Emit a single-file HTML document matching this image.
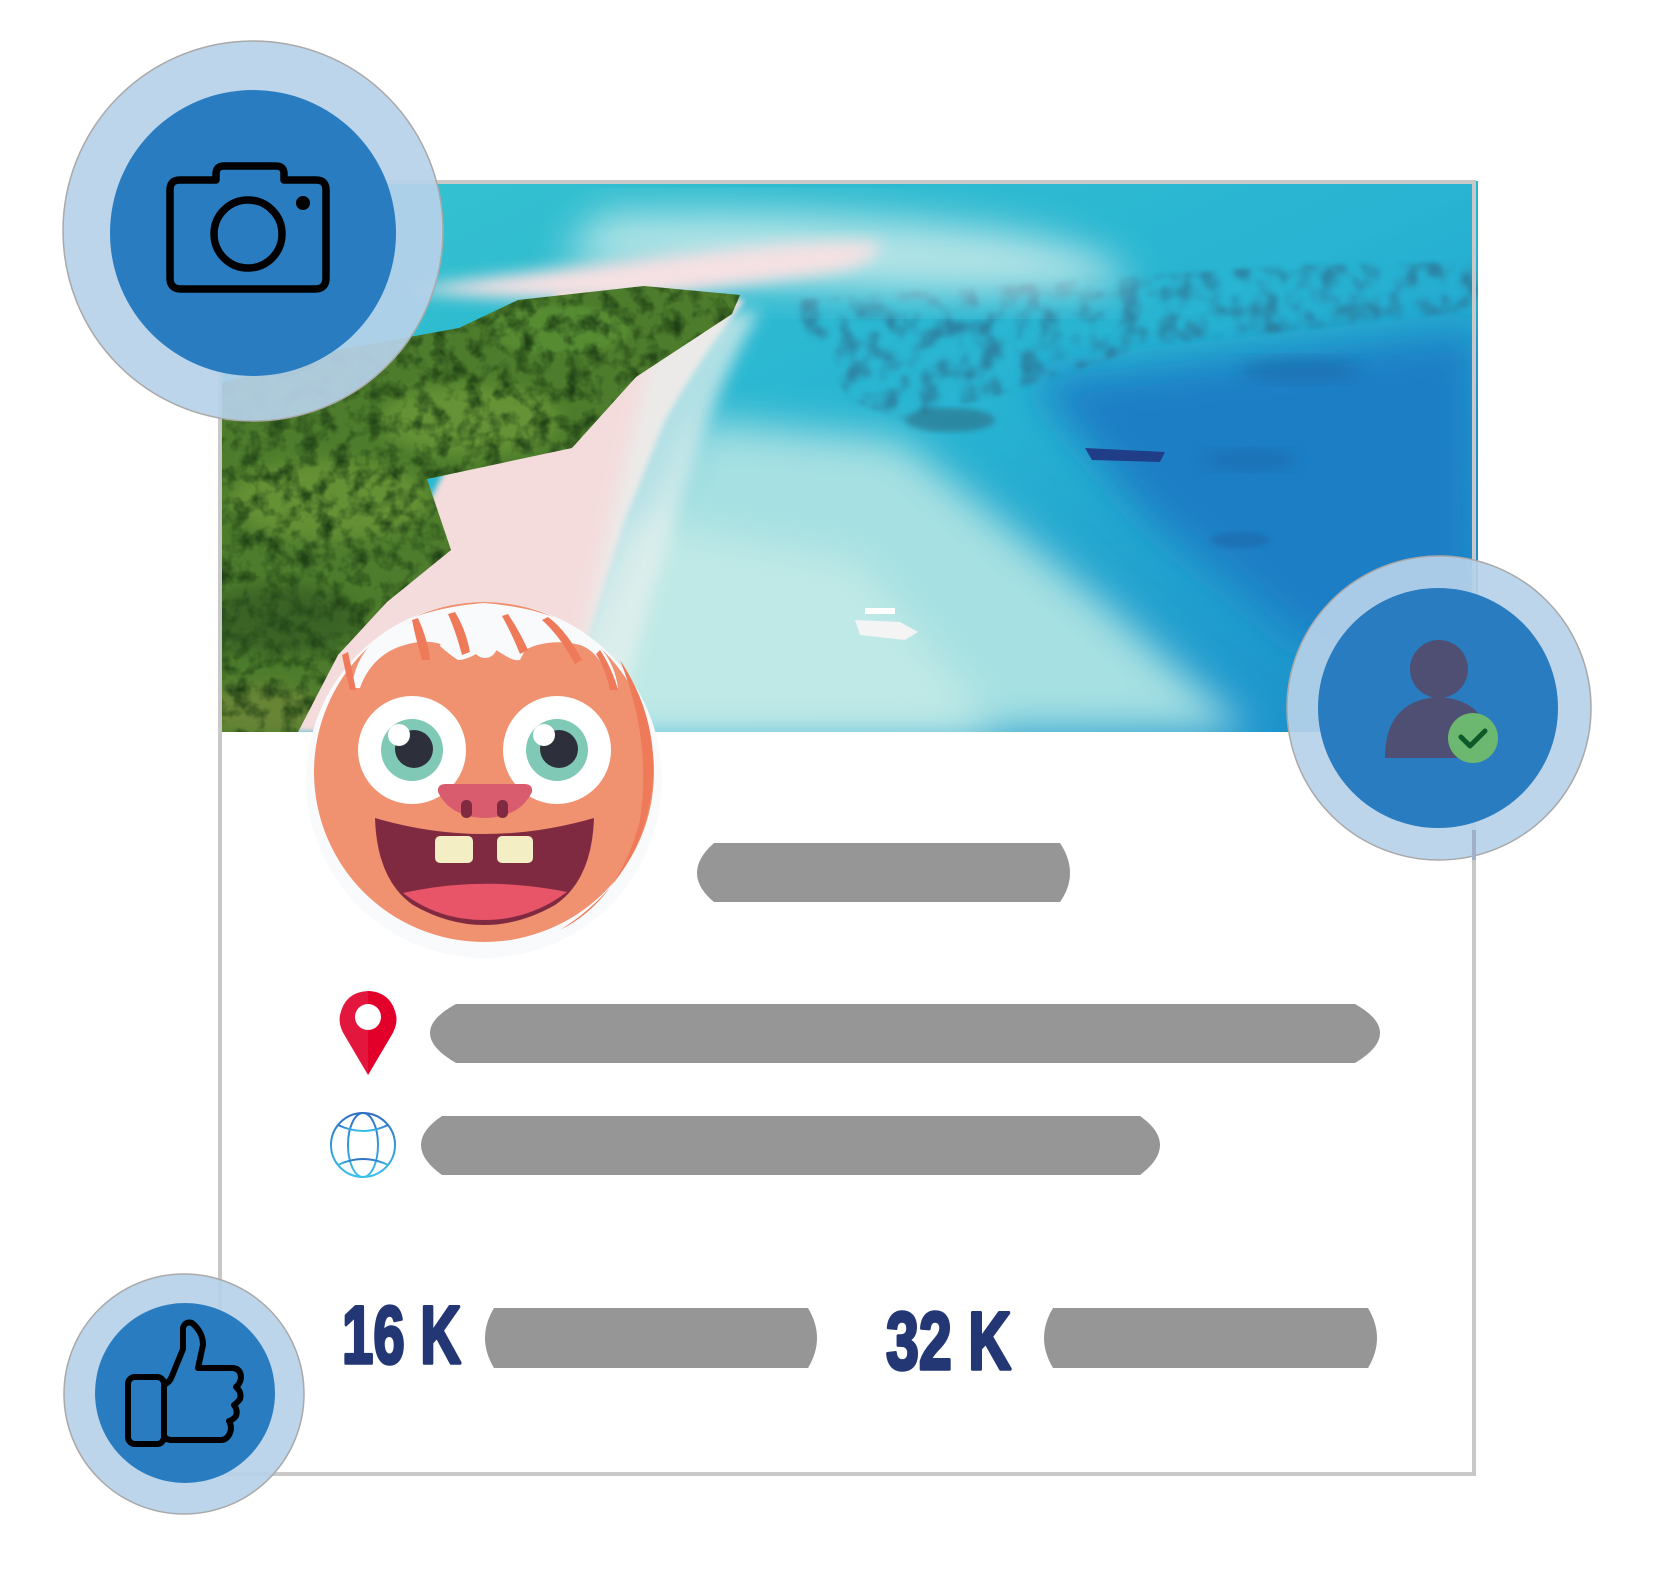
<!DOCTYPE html>
<html><head><meta charset="utf-8"><style>
html,body{margin:0;padding:0;background:#fff;}
svg{display:block;}
</style></head><body>
<svg width="1665" height="1582" viewBox="0 0 1665 1582" xmlns="http://www.w3.org/2000/svg">
<defs>
<clipPath id="ph"><rect x="218" y="181" width="1260" height="551"/></clipPath>
<clipPath id="veg"><path d="M218 384 L338 350 L459 328 L518 300 L644 286 L740 295 L732 314 L636 377 L572 448 L427 479 L451 550 L387 602 L338 655 L298 732 L218 732 Z"/></clipPath>
<clipPath id="coral"><path d="M790 300 L1000 285 L1300 265 L1478 262 L1478 310 L1300 330 L1150 345 L1000 395 L900 420 L850 400 L810 340 Z"/></clipPath>
<filter id="b8" x="-20%" y="-20%" width="140%" height="140%"><feGaussianBlur stdDeviation="8"/></filter>
<filter id="b20" x="-30%" y="-30%" width="160%" height="160%"><feGaussianBlur stdDeviation="20"/></filter>
<filter id="b4"><feGaussianBlur stdDeviation="3"/></filter>
<filter id="b2" x="-5%" y="-5%" width="110%" height="110%"><feGaussianBlur stdDeviation="2"/></filter>
<filter id="noiseG" x="0" y="0" width="100%" height="100%" color-interpolation-filters="sRGB">
<feTurbulence type="fractalNoise" baseFrequency="0.06" numOctaves="3" seed="4"/>
<feColorMatrix type="matrix" values="0 0 0 0 0.12  0 0 0 0 0.25  0 0 0 0 0.08  0 0 0 -2.2 1.3"/>
</filter>
<filter id="noiseC" x="0" y="0" width="100%" height="100%" color-interpolation-filters="sRGB">
<feTurbulence type="fractalNoise" baseFrequency="0.05" numOctaves="2" seed="9"/>
<feColorMatrix type="matrix" values="0 0 0 0 0.18  0 0 0 0 0.45  0 0 0 0 0.58  0 0 0 -3 1.7"/>
</filter>
<linearGradient id="sea" x1="0" y1="0" x2="1" y2="1">
<stop offset="0" stop-color="#36c3cf"/><stop offset="0.5" stop-color="#28b4d2"/><stop offset="1" stop-color="#1a8dcb"/>
</linearGradient>
<linearGradient id="glb" x1="0" y1="0" x2="0" y2="1"><stop offset="0" stop-color="#2f6fc4"/><stop offset="1" stop-color="#39c0ea"/></linearGradient>
</defs>

<g clip-path="url(#ph)">
<rect x="218" y="181" width="1260" height="551" fill="url(#sea)"/>
<path d="M520 732 L700 420 L900 440 L1100 600 L1250 732 Z" fill="#a6e0e2" filter="url(#b20)"/>
<path d="M560 732 L640 520 L860 560 L1000 732 Z" fill="#bfe9e6" filter="url(#b20)"/>
<path d="M1030 380 L1478 330 L1478 700 L1300 640 L1150 520 Z" fill="#1a7fc6" filter="url(#b20)"/>
<g opacity="0.75" filter="url(#b2)"><g clip-path="url(#coral)"><rect x="780" y="255" width="700" height="170" filter="url(#noiseC)"/></g></g>
<ellipse cx="950" cy="420" rx="45" ry="12" fill="#2e6d85" opacity="0.6" filter="url(#b4)"/>
<ellipse cx="1300" cy="370" rx="60" ry="12" fill="#1a5f9e" opacity="0.45" filter="url(#b8)"/>
<ellipse cx="1250" cy="460" rx="50" ry="10" fill="#1a5f9e" opacity="0.45" filter="url(#b8)"/>
<ellipse cx="1240" cy="540" rx="30" ry="8" fill="#1a5f9e" opacity="0.45" filter="url(#b4)"/>
<path d="M600 215 Q800 205 1000 230 Q1120 250 1130 285 Q1000 300 860 290 Q700 280 560 260 Z" fill="#d6efec" opacity="0.8" filter="url(#b20)"/>
<path d="M400 290 Q600 262 700 252 Q830 238 880 243 Q880 263 830 273 Q720 288 630 300 L560 300 Q470 297 400 290 Z" fill="#f6e1e3" filter="url(#b8)"/>
<path d="M560 290 L745 300 Q705 350 665 420 L625 520 L560 732 L290 732 L330 650 L400 560 L450 460 L500 380 Z" fill="#f4dcdc" filter="url(#b4)"/>
<path d="M660 320 L760 310 Q720 380 695 460 L650 600 L615 732 L560 732 L610 520 Z" fill="#e8f1ee" opacity="0.7" filter="url(#b8)"/>
<g clip-path="url(#veg)">
<rect x="218" y="280" width="530" height="460" fill="#4d7d2c"/>
<ellipse cx="470" cy="420" rx="90" ry="35" fill="#6f9c3a" opacity="0.7" filter="url(#b8)"/>
<ellipse cx="330" cy="500" rx="100" ry="40" fill="#769f3a" opacity="0.6" filter="url(#b8)"/>
<ellipse cx="280" cy="620" rx="80" ry="35" fill="#2d5220" opacity="0.6" filter="url(#b8)"/>
<ellipse cx="560" cy="330" rx="70" ry="25" fill="#5a9236" opacity="0.7" filter="url(#b4)"/>
<ellipse cx="260" cy="710" rx="60" ry="25" fill="#7c8a3c" opacity="0.6" filter="url(#b8)"/>
<rect x="218" y="280" width="530" height="460" filter="url(#noiseG)"/>
</g>
<path d="M855 620 L900 622 L918 632 L905 640 L860 635 Z" fill="#f4f4f4"/>
<rect x="865" y="608" width="30" height="6" fill="#fff"/>
<path d="M1085 448 L1165 452 L1160 462 L1092 460 Z" fill="#203e88"/>
</g>
<rect x="220" y="182" width="1254" height="1292" fill="none" stroke="#c8c8c8" stroke-width="4"/>

<g fill="#959695">
<path d="M714 843 L1060 843 Q1070 858 1070 873 Q1070 888 1060 902 L714 902 Q697 888 697 873 Q697 858 714 843 Z"/>
<path d="M456 1004 L1355 1004 Q1380 1018 1380 1033 Q1380 1048 1355 1063 L456 1063 Q430 1048 430 1033 Q430 1018 456 1004 Z"/>
<path d="M442 1116 L1140 1116 Q1160 1130 1160 1145 Q1160 1160 1140 1175 L442 1175 Q421 1160 421 1145 Q421 1130 442 1116 Z"/>
<path d="M494 1308 L808 1308 Q817 1323 817 1338 Q817 1353 808 1368 L494 1368 Q485 1353 485 1338 Q485 1323 494 1308 Z"/>
<path d="M1053 1308 L1368 1308 Q1377 1323 1377 1338 Q1377 1353 1368 1368 L1053 1368 Q1044 1353 1044 1338 Q1044 1323 1053 1308 Z"/>
</g>

<g font-family="Liberation Sans Narrow, Liberation Sans, sans-serif" font-weight="bold" font-size="82" fill="#233775" stroke="#233775" stroke-width="3.5" stroke-linejoin="round">
<text x="342" y="1363" textLength="119" lengthAdjust="spacingAndGlyphs">16 K</text>
<text x="886" y="1369" textLength="125" lengthAdjust="spacingAndGlyphs">32 K</text>
</g>

<path d="M368 1075 L345 1036 Q338 1025 340 1015 Q345 992 368 991 Q391 992 396 1015 Q398 1025 391 1036 Z" fill="#e3173d"/>
<path d="M368 1075 L391 1036 Q398 1025 396 1015 Q391 992 368 991 Z" fill="#e2002a"/>
<circle cx="368" cy="1017" r="13" fill="#fff"/>

<g fill="none" stroke="url(#glb)" stroke-width="2">
<circle cx="363" cy="1145" r="32"/>
<ellipse cx="363" cy="1145" rx="15" ry="32"/>
<line x1="363" y1="1113" x2="363" y2="1177"/>
<line x1="331" y1="1145" x2="395" y2="1145"/>
<path d="M338 1125 Q363 1137 388 1125"/>
<path d="M338 1165 Q363 1153 388 1165"/>
</g>

<circle cx="484" cy="780" r="178" fill="#f8fafc"/>
<circle cx="484" cy="772" r="170" fill="#f0916f"/>
<path d="M620 660 Q660 720 652 790 Q640 880 560 930 Q620 900 640 820 Q652 740 620 660 Z" fill="#ee7a5a"/>
<path d="M352 688 C356 640 400 610 484 603 C568 610 612 640 618 688 L612 688 C605 665 595 650 580 645 C560 640 540 642 525 650 L520 660 C510 662 500 650 490 648 C480 650 470 660 458 660 L452 650 C440 640 420 640 405 645 C385 650 368 665 360 688 Z" fill="#f8fafc"/>
<path d="M440 646 Q450 655 458 660 Q455 640 446 625 Z" fill="#f8fafc"/>
<circle cx="485" cy="646" r="12" fill="#f8fafc"/>
<g fill="#ee7a5a">
<path d="M418 618 Q428 640 430 660 L422 660 Q416 640 412 620 Z"/>
<path d="M455 612 Q466 630 470 652 L462 655 Q456 632 448 614 Z"/>
<path d="M508 614 Q520 632 528 650 L520 654 Q512 634 502 616 Z"/>
<path d="M548 617 Q566 630 582 660 L575 664 Q560 636 542 620 Z"/>
<path d="M600 650 Q612 668 618 690 L610 690 Q606 670 596 654 Z"/>
<path d="M342 655 Q346 675 350 690 L356 690 Q352 670 348 652 Z"/>
</g>
<circle cx="412" cy="750" r="54" fill="#fff"/>
<path d="M440 704 A54 54 0 0 1 420 803 A54 54 0 0 0 440 704 Z" fill="#e4e4e4"/>
<circle cx="412" cy="750" r="31" fill="#80c9b6"/>
<circle cx="414" cy="749" r="19" fill="#2d2f3a"/>
<circle cx="399" cy="735" r="11" fill="#fff"/>
<circle cx="557" cy="750" r="54" fill="#fff"/>
<path d="M585 704 A54 54 0 0 1 565 803 A54 54 0 0 0 585 704 Z" fill="#e4e4e4"/>
<circle cx="557" cy="750" r="31" fill="#80c9b6"/>
<circle cx="559" cy="749" r="19" fill="#2d2f3a"/>
<circle cx="544" cy="735" r="11" fill="#fff"/>
<path d="M446 784 L524 784 Q533 784 532 792 Q520 817 485 818 Q450 817 438 792 Q437 784 446 784 Z" fill="#d85c6e"/>
<rect x="461" y="800" width="11" height="18" rx="5" fill="#7f2a40"/>
<rect x="497" y="800" width="11" height="18" rx="5" fill="#7f2a40"/>
<path d="M375 818 Q484 850 594 818 Q592 880 555 905 Q520 925 484 925 Q448 925 413 905 Q377 880 375 818 Z" fill="#802a41"/>
<path d="M403 893 Q484 875 567 892 Q530 920 484 920 Q438 920 403 893 Z" fill="#e85468"/>
<rect x="435" y="836" width="38" height="27" rx="5" fill="#f3eec3"/>
<rect x="497" y="836" width="36" height="27" rx="5" fill="#f3eec3"/>

<circle cx="253" cy="231" r="190" fill="#b6d1e9" fill-opacity="0.92" stroke="#a9a9a9" stroke-width="1.5"/>
<circle cx="253" cy="233" r="143" fill="#297cc0"/>
<g fill="none" stroke="#000" stroke-width="7.5" stroke-linejoin="round">
<path d="M216 180 L216 174 Q216 166 224 166 L276 166 Q284 166 284 174 L284 180 L316 180 Q326 180 326 190 L326 278 Q326 289 315 289 L181 289 Q170 289 170 278 L170 190 Q170 180 180 180 Z"/>
<circle cx="248" cy="234" r="34"/>
</g>
<circle cx="303" cy="203" r="7" fill="#000"/>

<circle cx="1439" cy="708" r="152" fill="#b6d1e9" fill-opacity="0.92" stroke="#a9a9a9" stroke-width="1.5"/>
<circle cx="1438" cy="708" r="120" fill="#297cc0"/>
<circle cx="1439" cy="669" r="29" fill="#4f4f74"/>
<path d="M1385 758 Q1385 700 1439 697 Q1484 700 1490 740 L1470 758 Z" fill="#4f4f74"/>
<circle cx="1473" cy="738" r="25" fill="#6cb870"/>
<path d="M1461 737 L1470 746 L1485 731" fill="none" stroke="#0c5a2a" stroke-width="5" stroke-linecap="round" stroke-linejoin="round"/>
<line x1="1474" y1="830" x2="1474" y2="860" stroke="#9fb0c6" stroke-width="4"/>

<circle cx="184" cy="1394" r="120" fill="#b6d1e9" fill-opacity="0.92" stroke="#a9a9a9" stroke-width="1.5"/>
<circle cx="185" cy="1393" r="90" fill="#297cc0"/>
<g fill="none" stroke="#000" stroke-width="6" stroke-linejoin="round">
<rect x="128" y="1377" width="36" height="67" rx="7"/>
<path d="M164 1385 Q170 1382 172 1376 L183 1349 L183 1328 Q185 1321 192 1323 Q203 1332 203 1345 L198 1368 L233 1368 Q241 1369 241 1378 Q240 1384 236 1387 Q242 1392 240 1399 Q237 1403 234 1405 Q238 1410 236 1416 Q233 1420 229 1421 Q233 1428 229 1435 Q226 1440 221 1440 L172 1440 Q166 1440 164 1436"/>
</g>
</svg>
</body></html>
